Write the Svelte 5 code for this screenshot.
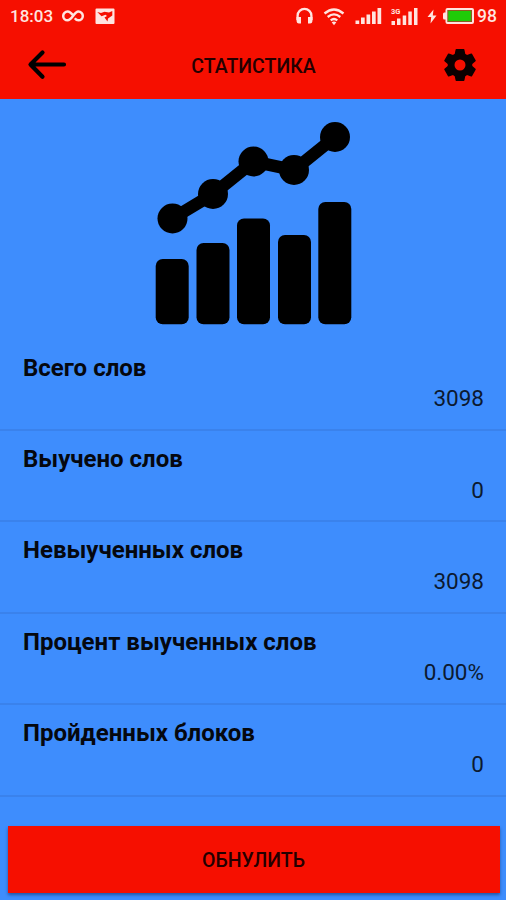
<script>
  const rows = [
    { label: 'Всего слов', value: '3098' },
    { label: 'Выучено слов', value: '0' },
    { label: 'Невыученных слов', value: '3098' },
    { label: 'Процент выученных слов', value: '0.00%' },
    { label: 'Пройденных блоков', value: '0' }
  ];
  const teeth = [0, 60, 120, 180, 240, 300];
</script>

<div class="screen">
  <header>
    <div class="status">
      <span class="time">18:03</span>
      <svg class="infinity" width="24" height="14" viewBox="0 0 24 14">
        <path d="M12.500 7 C10 3.600 8.500 2.500 6.600 2.500 A4.400 4.400 0 0 0 6.600 11.300 C8.600 11.300 9.800 10 12 7 C14.200 4 15.400 2.500 17.400 2.500 A4.400 4.400 0 0 1 17.400 11.300 C15.900 11.300 14.800 10.500 13.800 9.200" />
      </svg>
      <svg class="picture" width="20" height="17" viewBox="0 0 20 17">
        <path fill-rule="evenodd" d="M1.500 0.500H18.500Q19.500 0.500 19.500 1.500V15Q19.500 16 18.500 16H1.500Q0.500 16 0.500 15V1.500Q0.500 0.500 1.500 0.500ZM2.300 4L6.500 8.200L10.500 6.800L12 8L9.500 9.500L12.500 13.500L13 10.500L17.300 7.500V3L14 4.500L9.500 3.800L6 5Z" />
      </svg>
      <span class="spacer"></span>
      <svg class="headphones" width="19" height="18" viewBox="0 0 19 18">
        <path class="line" d="M2.600 13V8.800A6.900 6.900 0 0 1 16.400 8.800V13" />
        <path d="M1.500 10H6V16.500H4Q1.500 16.500 1.500 13ZM17.500 10H13V16.500H15Q17.500 16.500 17.500 13Z" />
      </svg>
      <svg class="wifi" width="22" height="19" viewBox="0 0 22 19">
        <path class="line" d="M1.500 6.500Q11 -1.600 20.500 6.500M4.700 10Q11 4.800 17.300 10M7.700 13.300Q11 10.800 14.300 13.300" />
        <path d="M8.700 15.200Q11 13.700 13.300 15.200L11 18.200Z" />
      </svg>
      <svg class="signal" width="27" height="18" viewBox="0 0 27 18">
        <path d="M0.500 13.500h3.700V17H0.500ZM6 10.500h3.700V17H6ZM11.500 7.500h3.700V17h-3.700ZM17 4.500h3.700V17H17ZM22.500 1h3.700v16h-3.700Z" />
      </svg>
      <svg class="mobile" width="27" height="19" viewBox="0 0 27 19">
        <path d="M0.500 14h3.500V18h-3.500ZM6 11.500h3.500V18H6ZM11.700 8.500h3.500V18h-3.500ZM17.300 4.500h3.500V18h-3.500ZM23 1h3.500v17h-3.500Z" />
        <text x="0" y="7">3G</text>
      </svg>
      <svg class="bolt" width="10" height="15" viewBox="0 0 10 15">
        <path d="M6.500 0.500L0.500 8H4.200L3.500 14.500L9.500 6.500H5.800Z" />
      </svg>
      <svg class="battery" width="33" height="18" viewBox="0 0 33 18">
        <path d="M5.500 1H30Q32 1 32 3V15Q32 17 30 17H5.500Q3.500 17 3.500 15V12.500H2.300Q1 12.500 1 11V7Q1 5.500 2.300 5.500H3.500V3Q3.500 1 5.500 1Z" />
        <rect x="5.300" y="3" width="24.700" height="12" fill="#8a5b22" />
        <rect x="6.300" y="4" width="22.500" height="10" fill="#1fcb08" />
      </svg>
      <span class="level">98</span>
    </div>
    <div class="toolbar">
      <svg class="back" width="40" height="32" viewBox="0 0 40 32">
        <path d="M37 15.500H4.500M15.500 3.500L3.500 15.500L15.500 27.800" />
      </svg>
      <h1>СТАТИСТИКА</h1>
      <svg class="gear" width="38" height="38" viewBox="0 0 38 38">
        <circle cx="19" cy="19" r="8.900" />
        {#each teeth as angle}
          <path d="M14.200 9.500L15.300 3.800H22.700L23.800 9.500Z" transform="rotate({angle} 19 19)" />
        {/each}
      </svg>
    </div>
  </header>

  <div class="hero">
    <svg width="198" height="205" viewBox="0 0 198 205">
      <path class="trend" d="M18.500 98.500L59 74L99.500 41.500L140 50L181 17" />
      <circle cx="18.500" cy="98.500" r="15" />
      <circle cx="59" cy="74" r="15" />
      <circle cx="99.500" cy="41.500" r="15" />
      <circle cx="140" cy="50" r="15" />
      <circle cx="181" cy="17" r="15" />
      <rect x="1.700" y="139" width="33" height="65.300" rx="7" />
      <rect x="42.500" y="123" width="33" height="81.300" rx="7" />
      <rect x="83" y="98.500" width="33" height="105.800" rx="7" />
      <rect x="124" y="115" width="33" height="89.300" rx="7" />
      <rect x="164.300" y="82" width="33" height="122.300" rx="7" />
    </svg>
  </div>

  <ul>
    {#each rows as row}
      <li>
        <span class="label">{row.label}</span>
        <span class="value">{row.value}</span>
      </li>
    {/each}
  </ul>

  <button>ОБНУЛИТЬ</button>
</div>

<style>
  .screen {
    width: 506px;
    height: 900px;
    overflow: hidden;
    display: flex;
    flex-direction: column;
    background: #3e8dfd;
    color: #000;
    font-family: Roboto, 'Noto Sans', sans-serif;
  }
  svg {
    flex: none;
    display: block;
  }
  header {
    height: 98.500px;
    flex: none;
    background: #f60f00;
  }
  .status {
    height: 32px;
    display: flex;
    align-items: center;
    color: #ffe4df;
    fill: #ffe4df;
    font-size: 17.500px;
    font-weight: 500;
    padding: 0 9px 0 10px;
    box-sizing: border-box;
  }
  .time {
    width: 51px;
    flex: none;
    white-space: nowrap;
    font-size: 17px;
  }
  .infinity {
    fill: none;
    stroke: #ffe4df;
    stroke-width: 2.500;
  }
  .picture {
    margin-left: 10px;
  }
  .spacer {
    flex: 1;
  }
  .line {
    fill: none;
    stroke: #ffe4df;
    stroke-width: 2.300;
  }
  .wifi {
    margin-left: 9px;
  }
  .signal {
    margin-left: 10px;
  }
  .mobile {
    margin-left: 9px;
  }
  .mobile text {
    font-size: 7.500px;
    font-weight: 700;
  }
  .bolt {
    margin-left: 9px;
  }
  .battery {
    margin-left: 5px;
  }
  .level {
    margin-left: 2px;
  }
  .toolbar {
    height: 66px;
    display: flex;
    align-items: center;
    justify-content: space-between;
    padding: 0 27px 0 27px;
  }
  .back {
    fill: none;
    stroke: #000;
    stroke-width: 4.200;
    stroke-linecap: round;
    stroke-linejoin: round;
  }
  .gear circle {
    fill: none;
    stroke: #0c0000;
    stroke-width: 6.800;
  }
  .gear path {
    fill: #0c0000;
    stroke: #0c0000;
    stroke-width: 1.500;
    stroke-linejoin: round;
  }
  h1 {
    margin: 2px 1px 0 0;
    font-size: 19.500px;
    font-weight: 500;
    color: #240000;
  }
  .hero {
    height: 240px;
    flex: none;
    box-sizing: border-box;
    padding: 21px 0 0 154px;
  }
  .trend {
    fill: none;
    stroke: #000;
    stroke-width: 12.500;
  }
  ul {
    list-style: none;
    margin: 0;
    padding: 0;
    flex: none;
  }
  li {
    height: 91.400px;
    box-sizing: border-box;
    border-bottom: 2px solid #3a82ec;
    padding: 13px 22px 0 23px;
    display: flex;
    flex-direction: column;
    line-height: 31px;
    font-size: 22.500px;
  }
  li:first-child {
    height: 92.500px;
    padding-top: 14px;
  }
  .label {
    font-size: 24px;
    font-weight: 700;
    color: #05080f;
  }
  .value {
    align-self: flex-end;
    margin-top: -0.500px;
    color: #0c1a30;
  }
  button {
    margin: 29.400px 6.500px 0 7.500px;
    height: 67px;
    flex: none;
    border: 0;
    padding: 2px 0 0;
    background: #f60f00;
    color: #240000;
    font-family: inherit;
    font-size: 19.500px;
    font-weight: 500;
    box-shadow: 0 2px 3px rgba(0, 20, 60, 0.45);
  }
</style>
